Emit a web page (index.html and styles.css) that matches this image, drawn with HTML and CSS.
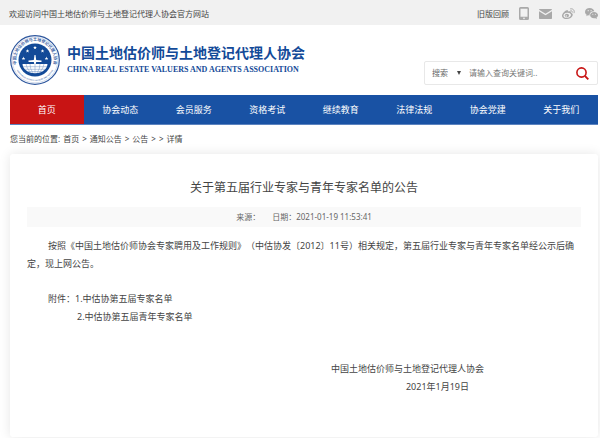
FILE: index.html
```html
<!DOCTYPE html>
<html lang="zh-CN">
<head>
<meta charset="utf-8">
<meta name="viewport" content="width=device-width, initial-scale=1">
<title>关于第五届行业专家与青年专家名单的公告</title>
<link rel="stylesheet" href="styles.css">
</head>
<body>
<div class="topbar">
  <span class="welcome">欢迎访问中国土地估价师与土地登记代理人协会官方网站</span>
  <div class="tools">
    <a href="#">旧版回顾</a>
    <a href="#" aria-label="手机版"><svg width="10" height="13" viewBox="0 0 10 13"><path fill="#a9a9a9" fill-rule="evenodd" d="M1.5 0h7Q10 0 10 1.500v10Q10 13 8.500 13h-7Q0 13 0 11.500v-10Q0 0 1.500 0zM1.500 1.800v8h7v-8zM5 10.600a.8.8 0 1 0 0 1.600.8.8 0 0 0 0-1.600z"/></svg></a>
    <a href="#" aria-label="邮箱"><svg width="13" height="10" viewBox="0 0 13 10"><path fill="#a9a9a9" d="M.5 0h12l.5.8-6.500 4L0 .8zM0 2.200l6.500 4 6.500-4V9.300q0 .7-.7.7H.7Q0 10 0 9.300z"/></svg></a>
    <a href="#" aria-label="微博"><svg width="13" height="12" viewBox="0 0 13 12"><path fill="#a9a9a9" fill-rule="evenodd" d="M4.800 2.300c1-.3 1.500.2 1.300 1.200 1.700-.7 3.200-.4 2.900 1.300 1.300.4 2 1.200 1.700 2.400-.5 2.200-3.100 3.800-6 3.800C2.200 11 0 9.800 0 7.900 0 5.700 2.700 3 4.800 2.300zM5.100 4.800C2.800 5 1.300 6.400 1.500 7.900c.2 1.300 1.800 2.100 3.800 1.900 2.200-.2 3.800-1.500 3.700-3-.2-1.400-1.900-2.200-3.900-2z"/><ellipse cx="4.900" cy="7.500" rx="2.100" ry="1.800" fill="#a9a9a9"/><circle cx="4.300" cy="8" r=".7" fill="#f1f1f1"/><path fill="none" stroke="#a9a9a9" stroke-linecap="round" d="M8.600.8c2.600-.5 4.300 1.700 3.500 4M8.800 2.700c1-.2 1.700.6 1.500 1.500"/></svg></a>
    <a href="#" aria-label="微信"><svg width="13" height="11" viewBox="0 0 13 11"><path fill="#a9a9a9" d="M4.700 0c2.400 0 4.300 1.400 4.600 3.300C6.600 3.200 4.500 4.700 4.500 7v.5L3 7.300 1.300 8.300l.4-1.600C.6 6 0 5 0 3.900 0 1.700 2 0 4.700 0z"/><path fill="#a9a9a9" d="M9 3.900c2.300 0 4 1.400 4 3.200 0 1-.5 1.900-1.400 2.500l.3 1.300-1.400-.7C7.300 10.900 5.100 9.300 5.100 7.100 5.100 5.300 6.800 3.900 9 3.900z"/><g fill="#f1f1f1"><circle cx="3.200" cy="2.700" r=".6"/><circle cx="6.100" cy="2.700" r=".6"/><circle cx="7.800" cy="6.200" r=".5"/><circle cx="10.400" cy="6.200" r=".5"/></g></svg></a>
  </div>
</div>

<div class="shell">
  <header class="header">
    <a class="brand" href="#">
      <svg class="emblem" width="50" height="50" viewBox="0 0 50 50" aria-hidden="true">
        <defs>
          <path id="arc-top" d="M7.400 32.200A19 19 0 1 1 42.600 32.200"/>
          <path id="arc-bottom" d="M6.300 34.500A21 21 0 0 0 43.700 34.500"/>
          <path id="star" d="M0-1.900.5-.6 1.800-.6.8.3 1.200 1.600 0 .8-1.200 1.600-.8.3-1.800-.6-.5-.6z"/>
        </defs>
        <circle cx="25" cy="25" r="24.300" fill="#fff" stroke="#2d569d" stroke-width="1.200"/>
        <circle cx="25" cy="25" r="22.800" fill="none" stroke="#a9bad8" stroke-width=".5"/>
        <circle cx="25" cy="25" r="16.500" fill="#134a98"/>
        <text class="ring"><textPath href="#arc-top" startOffset="50%">中国土地估价师与土地登记代理人协会</textPath></text>
        <text class="ring-en"><textPath href="#arc-bottom" startOffset="50%">CHINA REAL ESTATE VALUERS AND AGENTS</textPath></text>
        <g fill="#fff">
          <use href="#star" x="13.500" y="23.500"/><use href="#star" x="17.500" y="16"/><use href="#star" x="25" y="12.700"/><use href="#star" x="32.500" y="16"/><use href="#star" x="36.500" y="23.500"/>
          <path d="M24.500 20h1l.7 5.100 5.300.5v1.300h-5.300l-.5 2.100h-1.400l-.5-2.100h-5.300v-1.300l5.300-.5z"/>
          <path d="M12.500 29h25C37 34.200 32 38.200 25 38.200S13 34.200 12.500 29z"/>
        </g>
        <path d="M13 31.700h24M15 34.300h20M18 36.500h14M25 29v9M20 29q0 5 3 9M30 29q0 5-3 9M16 29q.5 4 4 8M34 29q-.5 4-4 8" fill="none" stroke="#7594c5" stroke-width=".5"/>
      </svg>
      <span class="brand-text">
        <strong class="brand-cn">中国土地估价师与土地登记代理人协会</strong>
        <span class="brand-en">CHINA REAL ESTATE VALUERS AND AGENTS ASSOCIATION</span>
      </span>
    </a>
    <form class="search">
      <span class="scope">
        <select aria-label="搜索范围"><option>搜索</option></select>
        <svg width="4" height="4" viewBox="0 0 4 4" aria-hidden="true"><path d="M0 0h4L2 4z" fill="#444"/></svg>
      </span>
      <input type="text" aria-label="查询关键词" placeholder="请输入查询关键词..">
      <button type="submit" aria-label="查询"><svg width="13" height="13" viewBox="0 0 13 13"><circle cx="5.500" cy="5.500" r="4.600" fill="none" stroke="#c81414" stroke-width="1.600"/><path d="M9 9l3.300 3.300" stroke="#c81414" stroke-width="1.800"/></svg></button>
    </form>
  </header>

  <nav class="nav">
    <a class="active" href="#">首页</a>
    <a href="#">协会动态</a>
    <a href="#">会员服务</a>
    <a href="#">资格考试</a>
    <a href="#">继续教育</a>
    <a href="#">法律法规</a>
    <a href="#">协会党建</a>
    <a href="#">关于我们</a>
  </nav>

  <div class="crumbs">
    <span>您当前的位置:</span>
    <a href="#">首页</a><span>&gt;</span>
    <a href="#">通知公告</a><span>&gt;</span>
    <a href="#">公告</a><span>&gt;</span><span>&gt;</span>
    <span>详情</span>
  </div>

  <main class="card">
    <h1>关于第五届行业专家与青年专家名单的公告</h1>
    <div class="meta"><span>来源：</span><span>日期：2021-01-19 11:53:41</span></div>
    <article>
      <p class="lead">按照《中国土地估价师协会专家聘用及工作规则》（中估协发〔2012〕11号）相关规定，第五届行业专家与青年专家名单经公示后确定，现上网公告。</p>
      <div class="files">
        <span>附件：</span>
        <ol>
          <li><a href="#">1.中估协第五届专家名单</a></li>
          <li><a href="#">2.中估协第五届青年专家名单</a></li>
        </ol>
      </div>
      <div class="sign">
        <p>中国土地估价师与土地登记代理人协会</p>
        <p class="date">2021年1月19日</p>
      </div>
    </article>
  </main>
</div>
</body>
</html>
```
FILE: styles.css
```css
* {
  box-sizing: border-box;
}

body {
  margin: 0;
  background: #fff;
  color: #444;
  font: 8px/12px "Noto Sans", "Noto Sans CJK SC", sans-serif;
  text-spacing-trim: space-all;
}

a {
  color: inherit;
  text-decoration: none;
}

svg {
  display: block;
}

p,
h1,
ol {
  margin: 0;
  padding: 0;
  font-weight: 400;
}

.topbar {
  display: flex;
  justify-content: space-between;
  align-items: center;
  height: 25px;
  padding: 2px 2px 0 9px;
  background: #f1f1f1;
}

.tools {
  display: flex;
  align-items: center;
  gap: 10px;
}

.shell {
  padding: 0 2px 1px 10px;
}

.header {
  display: flex;
  justify-content: space-between;
  align-items: flex-start;
  height: 70px;
  padding-top: 10px;
}

.brand {
  display: flex;
  align-items: center;
  gap: 7px;
  color: #134a98;
}

.ring,
.ring-en {
  fill: #3d62a4;
  font-size: 4px;
  font-weight: 700;
  text-anchor: middle;
}

.ring-en {
  font-family: "Liberation Serif", serif;
  font-size: 2px;
}

.brand-text {
  display: flex;
  flex-direction: column;
}

.brand-cn {
  font-family: "Noto Sans CJK SC", sans-serif;
  font-size: 14px;
  line-height: 20px;
}

.brand-en {
  font: 700 8px/16px "Liberation Serif", serif;
}

.search {
  display: flex;
  align-items: center;
  width: 174px;
  height: 24px;
  margin-top: 26px;
  padding: 0 8px 0 7px;
  border: 1px solid #e8e8e8;
  border-radius: 2px;
}

.scope {
  display: flex;
  align-items: center;
  width: 37px;
}

.search select,
.search input,
.search button {
  appearance: none;
  margin: 0;
  padding: 0;
  border: 0;
  background: none;
  color: #666;
  font: inherit;
}

.search select {
  width: 25px;
}

.search input {
  flex: 1;
  min-width: 0;
}

.search input::placeholder {
  color: #777;
}

.nav {
  display: grid;
  grid-template-columns: repeat(8, 1fr);
  background: #1952a4;
  border-bottom: 1px solid #5c83bf;
  color: #fff;
  font-size: 9px;
  line-height: 29px;
  text-align: center;
}

.nav .active {
  background: #c81414;
}

.crumbs {
  display: flex;
  gap: 3px;
  padding: 8px 0 9px;
}

.card {
  min-height: 283px;
  padding: 24px 17px;
  background: #fff;
  border-radius: 3px;
  box-shadow: 0 0 12px rgba(0, 0, 0, 0.1);
}

h1 {
  font-size: 12px;
  line-height: 20px;
  text-align: center;
}

.meta {
  display: flex;
  justify-content: center;
  gap: 12px;
  margin: 9px 0 10px;
  background: #f9f9f9;
  color: #666;
  line-height: 20px;
}

article {
  font-size: 9px;
  line-height: 18px;
}

.lead {
  text-indent: 21px;
}

.files {
  display: flex;
  margin: 17px 0 34px 21px;
}

.files ol {
  list-style: none;
}

.files li + li {
  padding-left: 2px;
}

.sign {
  width: max-content;
  margin: 0 97px 0 auto;
}

.date {
  padding-right: 15px;
  text-align: right;
}
```
